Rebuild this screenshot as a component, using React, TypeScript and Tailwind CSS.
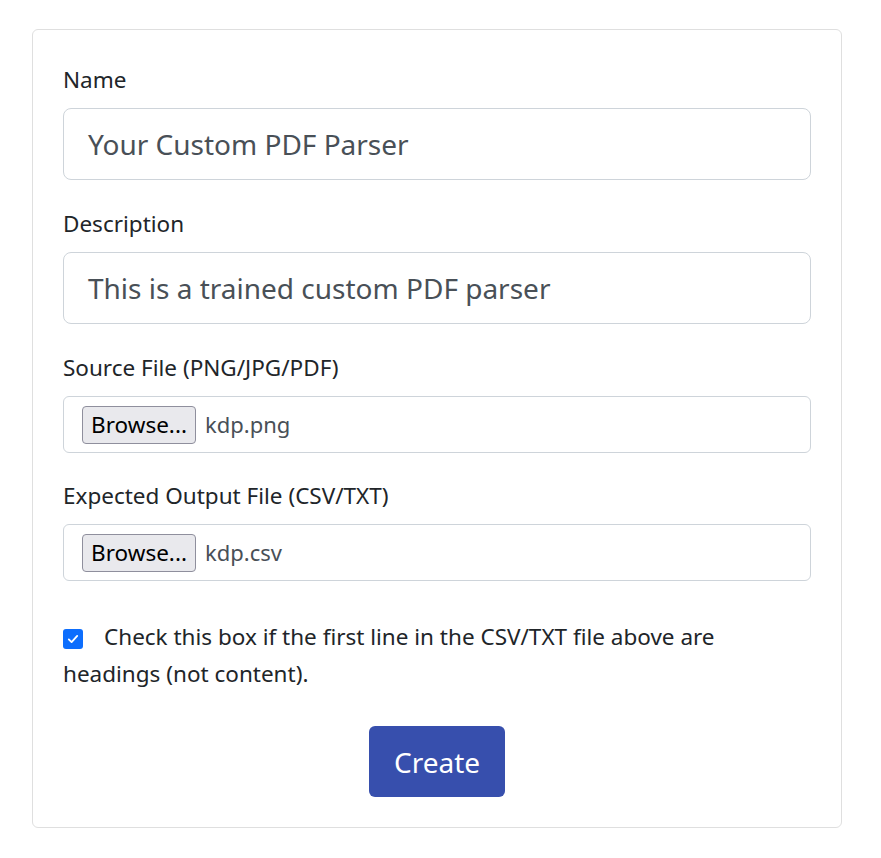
import React from "react";

const font = { fontFamily: '"Noto Sans", "Open Sans", sans-serif' };

function Label({ children }: { children: React.ReactNode }) {
  return (
    <div className="text-[22.5px] leading-[30px] text-[#212529] mb-[13px]">{children}</div>
  );
}

function TextField({ value }: { value: string }) {
  return (
    <div className="h-[72px] rounded-[8px] border border-[#ced4da] flex items-center pl-[24px] text-[28px] text-[#495057]">
      {value}
    </div>
  );
}

function FileField({ name }: { name: string }) {
  return (
    <div className="h-[57px] rounded-[6px] border border-[#ced4da] flex items-center pl-[18px]">
      <div className="h-[38px] w-[114px] rounded-[4px] border border-[#8f8f9d] bg-[#e9e9ed] flex items-center justify-center text-[22.5px] text-black">
        Browse...
      </div>
      <span className="ml-[9px] text-[22px] text-[#495057]">{name}</span>
    </div>
  );
}

export default function App() {
  return (
    <div className="bg-white w-[881px] h-[858px] pt-[29px] pl-[32px]" style={font}>
      <div className="w-[810px] h-[799px] rounded-[6px] border border-[#dfdfdf] px-[30px] pt-[35px]">
        <Label>Name</Label>
        <TextField value="Your Custom PDF Parser" />
        <div className="h-[29px]" />
        <Label>Description</Label>
        <TextField value="This is a trained custom PDF parser" />
        <div className="h-[29px]" />
        <Label>Source File (PNG/JPG/PDF)</Label>
        <FileField name="kdp.png" />
        <div className="h-[28px]" />
        <Label>Expected Output File (CSV/TXT)</Label>
        <FileField name="kdp.csv" />
        <div className="mt-[37px] text-[22.5px] leading-[37px] text-[#212529]">
          <span className="inline-flex align-[-1px] mr-[21px] w-[20px] h-[20px] rounded-[3px] bg-[#0d6efd] items-center justify-center">
            <svg viewBox="0 0 20 20" width="14" height="14" fill="none">
              <path d="M4 10.5l4 4 8-9" stroke="white" strokeWidth="2.6" strokeLinecap="round" strokeLinejoin="round" />
            </svg>
          </span>
          Check this box if the first line in the CSV/TXT file above are headings (not content).
        </div>
        <div className="mt-[34px] flex justify-center">
          <div className="w-[136px] h-[71px] rounded-[6px] bg-[#374fad] text-white text-[28px] flex items-center justify-center">
            Create
          </div>
        </div>
      </div>
    </div>
  );
}
